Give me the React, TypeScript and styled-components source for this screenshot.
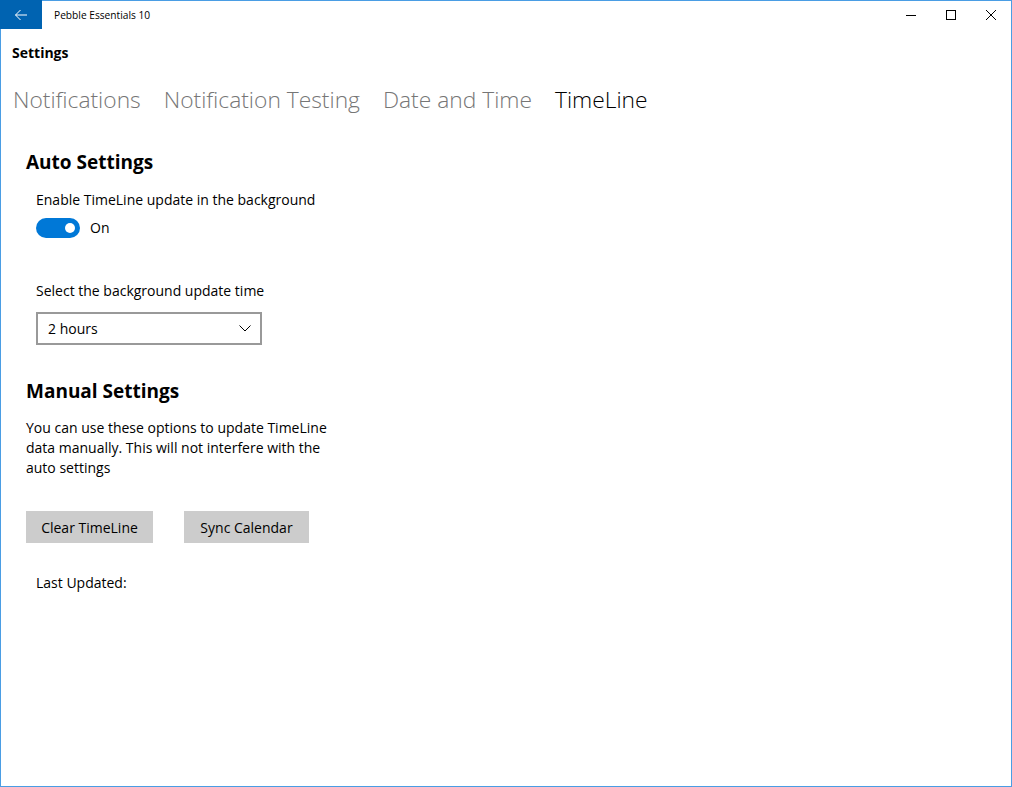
import React from "react";
import styled, { createGlobalStyle } from "styled-components";

const Global = createGlobalStyle`
  html, body { margin: 0; padding: 0; background: #fff; }
  body { font-family: "Segoe UI", "Open Sans", "Noto Sans", sans-serif; color: #000; }
  * { box-sizing: border-box; }
`;

const Window = styled.div`
  width: 1012px;
  height: 787px;
  border: 1px solid #4a9de4;
  border-top: none;
  border-left: none;
  display: flex;
  flex-direction: column;
  background: #fff;
  overflow: hidden;
`;

const TopEdge = styled.div`
  height: 1px;
  background: #4a9de4;
`;

const Body = styled.div`
  flex: 1;
  display: flex;
  flex-direction: column;
  border-left: 1px solid #4a9de4;
`;

const TitleBar = styled.div`
  height: 28px;
  display: flex;
  align-items: center;
`;

const BackButton = styled.div`
  width: 42px;
  height: 29px;
  margin-top: -1px;
  margin-left: -1px;
  background: #0063b1;
  display: flex;
  align-items: center;
  justify-content: center;
`;

const AppTitle = styled.div`
  font-size: 10.2px;
  margin-left: 12px;
  flex: 1;
  color: #000;
`;

const Controls = styled.div`
  display: flex;
  height: 28px;
`;

const ControlButton = styled.div`
  width: 40px;
  height: 28px;
  display: flex;
  align-items: center;
  justify-content: center;
`;

const Content = styled.div`
  display: flex;
  flex-direction: column;
`;

const PageTitle = styled.div`
  font-size: 14px;
  font-weight: 700;
  padding: 14px 0 0 11px;
  height: 39px;
`;

const Tabs = styled.div`
  display: flex;
  gap: 23px;
  padding: 15px 0 0 12px;
  height: 80px;
`;

const Tab = styled.div<{ $active?: boolean }>`
  font-size: 22.8px;
  font-weight: 300;
  color: ${(p) => (p.$active ? "#000" : "#767676")};
  line-height: 34px;
`;

const Section = styled.div`
  display: flex;
  flex-direction: column;
  padding-left: 25px;
`;

const SectionTitle = styled.div<{ $gap?: number }>`
  font-size: 19px;
  font-weight: 700;
  line-height: 28px;
  margin-top: ${(p) => p.$gap ?? 0}px;
`;

const Indented = styled.div`
  display: flex;
  flex-direction: column;
  padding-left: 10px;
`;

const Label = styled.div<{ $gap?: number }>`
  font-size: 14px;
  line-height: 20px;
  margin-top: ${(p) => p.$gap ?? 0}px;
`;

const ToggleRow = styled.div`
  display: flex;
  align-items: center;
  gap: 10px;
  margin-top: 7px;
  height: 22px;
`;

const ToggleTrack = styled.div`
  width: 44px;
  height: 20px;
  border-radius: 10px;
  background: #0078d7;
  display: flex;
  align-items: center;
  justify-content: flex-end;
  padding-right: 5px;
`;

const ToggleKnob = styled.div`
  width: 10px;
  height: 10px;
  border-radius: 50%;
  background: #fff;
`;

const Select = styled.div`
  width: 226px;
  height: 33px;
  border: 2px solid #999;
  display: flex;
  align-items: center;
  justify-content: space-between;
  padding: 0 9px 0 10px;
  font-size: 14px;
  margin-top: 11px;
`;

const Paragraph = styled.div`
  font-size: 14px;
  line-height: 20px;
  margin-top: 13px;
`;

const ButtonRow = styled.div`
  display: flex;
  gap: 31px;
  margin-top: 33px;
`;

const Button = styled.div<{ $w: number }>`
  width: ${(p) => p.$w}px;
  height: 32px;
  background: #cccccc;
  font-size: 14px;
  display: flex;
  align-items: center;
  justify-content: center;
`;

export default function App() {
  return (
    <>
      <Global />
      <Window>
        <TopEdge />
        <Body>
          <TitleBar>
            <BackButton>
              <svg width="14" height="12" viewBox="0 0 14 12" fill="none" stroke="#fff" strokeWidth="1">
                <path d="M13 6H1.5M6.5 1L1.5 6l5 5" />
              </svg>
            </BackButton>
            <AppTitle>Pebble Essentials 10</AppTitle>
            <Controls>
              <ControlButton>
                <svg width="10" height="10" viewBox="0 0 10 10" stroke="#000" strokeWidth="1">
                  <path d="M0 5.5h10" />
                </svg>
              </ControlButton>
              <ControlButton>
                <svg width="10" height="10" viewBox="0 0 10 10" fill="none" stroke="#000" strokeWidth="1">
                  <rect x="0.5" y="0.5" width="9" height="9" />
                </svg>
              </ControlButton>
              <ControlButton>
                <svg width="10" height="10" viewBox="0 0 10 10" stroke="#000" strokeWidth="1">
                  <path d="M0 0l10 10M10 0L0 10" />
                </svg>
              </ControlButton>
            </Controls>
          </TitleBar>
          <Content>
            <PageTitle>Settings</PageTitle>
            <Tabs>
              <Tab>Notifications</Tab>
              <Tab>Notification Testing</Tab>
              <Tab>Date and Time</Tab>
              <Tab $active>TimeLine</Tab>
            </Tabs>
            <Section>
              <SectionTitle>Auto Settings</SectionTitle>
              <Indented>
                <Label $gap={14}>Enable TimeLine update in the background</Label>
                <ToggleRow>
                  <ToggleTrack>
                    <ToggleKnob />
                  </ToggleTrack>
                  <Label>On</Label>
                </ToggleRow>
                <Label $gap={42}>Select the background update time</Label>
                <Select>
                  <span>2 hours</span>
                  <svg width="12" height="7" viewBox="0 0 12 7" fill="none" stroke="#000" strokeWidth="1">
                    <path d="M0.5 0.5l5.5 5.5 5.5-5.5" />
                  </svg>
                </Select>
              </Indented>
              <SectionTitle $gap={32}>Manual Settings</SectionTitle>
              <Paragraph>
                You can use these options to update TimeLine
                <br />
                data manually. This will not interfere with the
                <br />
                auto settings
              </Paragraph>
              <ButtonRow>
                <Button $w={127}>Clear TimeLine</Button>
                <Button $w={125}>Sync Calendar</Button>
              </ButtonRow>
              <Indented>
                <Label $gap={30}>Last Updated:</Label>
              </Indented>
            </Section>
          </Content>
        </Body>
      </Window>
    </>
  );
}
